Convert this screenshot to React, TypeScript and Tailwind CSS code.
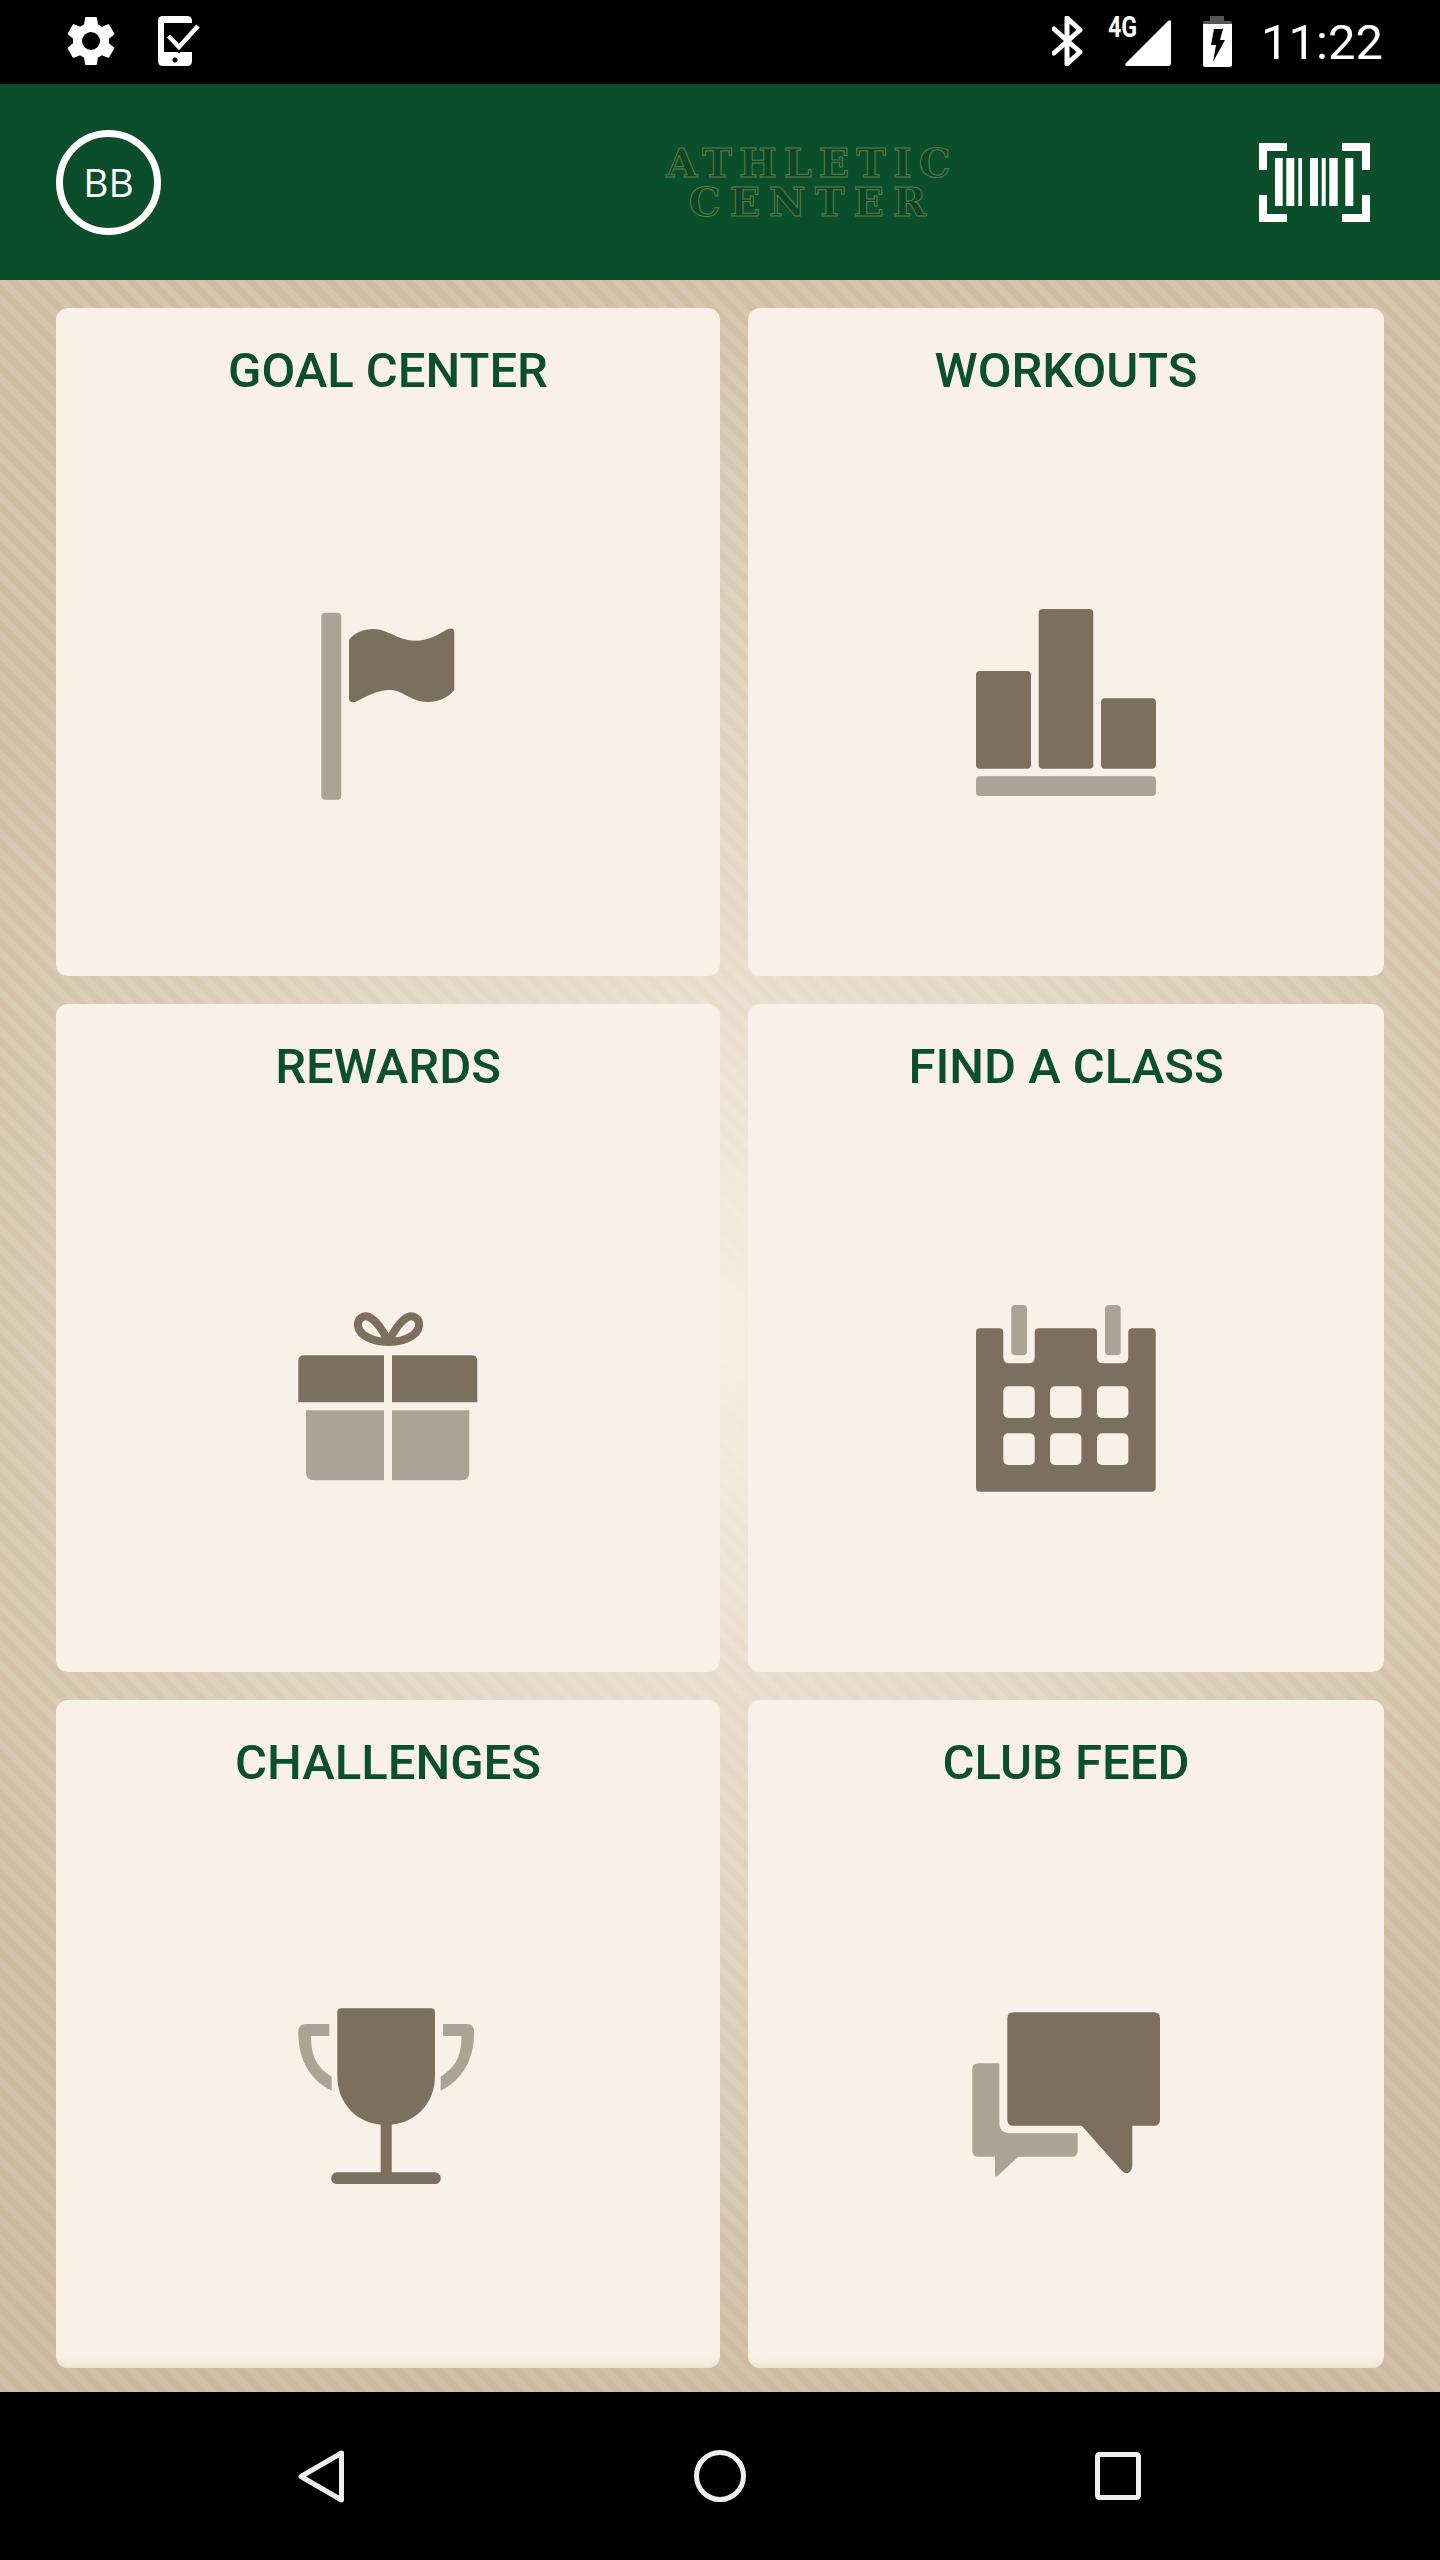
import React from "react";

const DARK = "#7c6f5d";
const LIGHT = "#aca296";
const CARD = "#f9f0e7";

const FlagIcon = () => (
  <svg width="180" height="196" viewBox="0 0 180 196" className="overflow-visible">
    <rect x="23.3" y="4.7" width="20" height="187" rx="4" fill={LIGHT} />
    <path
      d="M51 32C56 25 65 21 75 21C90 21 100 32.7 117 32.7C130 32.7 140 27 149 21.5Q156.3 18.5 156.3 25V82C150 90 140 94 130 94C113 94 105 82 92 82C78 82 68 89 57 94Q51 95.5 51 90Z"
      fill={DARK}
    />
  </svg>
);

const BarsIcon = () => (
  <svg width="180" height="196" viewBox="0 0 180 196" className="overflow-visible">
    <rect x="0" y="63" width="55" height="97.7" rx="4" fill={DARK} />
    <rect x="62.7" y="1" width="54.6" height="159.7" rx="4" fill={DARK} />
    <rect x="125" y="90.3" width="55" height="70.4" rx="4" fill={DARK} />
    <rect x="0" y="168.3" width="180" height="19.7" rx="4" fill={LIGHT} />
  </svg>
);

const GiftIcon = () => (
  <svg width="180" height="196" viewBox="0 0 180 196" className="overflow-visible">
    <path d="M90.5 38C80 38 62 34 60 22C59 14 66 11 71 13C78 16 86 28 90.5 38Z" fill="none" stroke={DARK} strokeWidth="8" strokeLinejoin="round" />
    <path d="M90.5 38C101 38 119 34 121 22C122 14 115 11 110 13C103 16 95 28 90.5 38Z" fill="none" stroke={DARK} strokeWidth="8" strokeLinejoin="round" />
    <path d="M6 51.3H86V98.3H0.3V57Q0.3 51.3 6 51.3Z" fill={DARK} />
    <path d="M94 51.3H173.6Q179.3 51.3 179.3 57V98.3H94Z" fill={DARK} />
    <path d="M8 106.3H86V176.3H16Q8 176.3 8 168.3Z" fill={LIGHT} />
    <path d="M94 106.3H171.3V168.3Q171.3 176.3 163.3 176.3H94Z" fill={LIGHT} />
  </svg>
);

const CalendarIcon = () => (
  <svg width="180" height="196" viewBox="0 0 180 196" className="overflow-visible">
    <path
      d="M4 24.3H23.3Q27.3 24.3 27.3 28.3V53.3Q27.3 59.3 33.3 59.3H52.7Q58.7 59.3 58.7 53.3V28.3Q58.7 24.3 62.7 24.3H117Q121 24.3 121 28.3V53.3Q121 59.3 127 59.3H146.3Q152.3 59.3 152.3 53.3V28.3Q152.3 24.3 156.3 24.3H175.7Q179.7 24.3 179.7 28.3V183.7Q179.7 187.7 175.7 187.7H4Q0 187.7 0 183.7V28.3Q0 24.3 4 24.3Z"
      fill={DARK}
    />
    <rect x="35.3" y="1" width="15.7" height="50.3" rx="4" fill={LIGHT} />
    <rect x="129" y="1" width="15.7" height="50.3" rx="4" fill={LIGHT} />
    {[82.3, 129.3].map((y) =>
      [27.3, 74, 121].map((x) => (
        <rect key={`${x}-${y}`} x={x} y={y} width="31.4" height="31.7" rx="5" fill={CARD} />
      ))
    )}
  </svg>
);

const TrophyIcon = () => (
  <svg width="180" height="196" viewBox="0 0 180 196" className="overflow-visible">
    <path d="M31.3 24H8Q0.3 24 0.3 32C0.3 60 12 80 33.7 90.7V76.7C20 68 13 58 13 36H31.3Z" fill={LIGHT} />
    <path d="M145.1 24H168.4Q176.1 24 176.1 32C176.1 60 164.4 80 142.7 90.7V76.7C156.4 68 163.4 58 163.4 36H145.1Z" fill={LIGHT} />
    <path d="M43 8.3H133Q137 8.3 137 12.3V76C137 105 115 125 88 125C61 125 39.3 105 39.3 76V12.3Q39.3 8.3 43 8.3Z" fill={DARK} />
    <rect x="82.7" y="120" width="11" height="56" fill={DARK} />
    <rect x="33.3" y="172.3" width="109.4" height="11.7" rx="5.5" fill={DARK} />
  </svg>
);

const ChatIcon = () => (
  <svg width="180" height="196" viewBox="0 0 180 196" className="overflow-visible">
    <path d="M2.3 63.3H23.3V122Q23.3 133.3 34 133.3H101.7V150.7Q101.7 156.7 95.7 156.7H42.3L22 175.5Q19 178 19 174V156.7H2.3Q-3.7 156.7 -3.7 150.7V69.3Q-3.7 63.3 2.3 63.3Z" fill={LIGHT} />
    <path d="M37.3 12.3H178Q184 12.3 184 18.3V119.7Q184 125.7 178 125.7H156.3V165Q156.3 171 152 173Q149 174 146 171L105.7 125.7H37.3Q31.3 125.7 31.3 119.7V18.3Q31.3 12.3 37.3 12.3Z" fill={DARK} />
  </svg>
);

const cards = [
  { title: "GOAL CENTER", icon: <FlagIcon /> },
  { title: "WORKOUTS", icon: <BarsIcon /> },
  { title: "REWARDS", icon: <GiftIcon /> },
  { title: "FIND A CLASS", icon: <CalendarIcon /> },
  { title: "CHALLENGES", icon: <TrophyIcon /> },
  { title: "CLUB FEED", icon: <ChatIcon /> },
];

const StatusBar = () => (
  <div className="flex h-[84px] shrink-0 items-center bg-black pl-[66px] pr-[57px] text-white">
    {/* settings gear */}
    <svg width="50" height="50" viewBox="2.2 2 19.6 20" fill="white" className="mt-[-2px]">
      <path d="M19.14 12.94c.04-.3.06-.61.06-.94s-.02-.64-.07-.94l2.03-1.58a.49.49 0 0 0 .12-.61l-1.92-3.32a.49.49 0 0 0-.59-.22l-2.39.96a7 7 0 0 0-1.62-.94l-.36-2.54a.48.48 0 0 0-.48-.41h-3.84a.48.48 0 0 0-.47.41l-.36 2.54c-.59.24-1.13.57-1.62.94l-2.39-.96a.49.49 0 0 0-.59.22L2.74 8.87a.48.48 0 0 0 .12.61l2.03 1.58c-.05.3-.09.63-.09.94s.02.64.07.94l-2.03 1.58a.49.49 0 0 0-.12.61l1.92 3.32c.12.22.37.29.59.22l2.39-.96c.5.38 1.03.7 1.62.94l.36 2.54c.05.24.24.41.48.41h3.84c.24 0 .44-.17.47-.41l.36-2.54c.59-.24 1.13-.56 1.62-.94l2.39.96c.22.08.47 0 .59-.22l1.92-3.32a.48.48 0 0 0-.12-.61zM12 15.6A3.6 3.6 0 1 1 12 8.4a3.6 3.6 0 0 1 0 7.2z" />
    </svg>
    {/* phone with check */}
    <svg width="42" height="50" viewBox="0 0 42 50" className="ml-[42px] mt-[-2px]">
      <path d="M5 0H29Q34 0 34 5V7H6V36H34V45Q34 50 29 50H5Q0 50 0 45V5Q0 0 5 0Z" fill="white" />
      <circle cx="17" cy="44" r="2.5" fill="black" />
      <path d="M8 7H34V11L21 31L8 20Z" fill="black" />
      <path d="M10.5 20L21 31L40 10" fill="none" stroke="black" strokeWidth="9" />
      <path d="M10.5 20L21 31L40 10" fill="none" stroke="white" strokeWidth="4.5" />
    </svg>
    <div className="flex-1" />
    {/* bluetooth */}
    <svg width="32" height="50" viewBox="0 0 32 50" className="mt-[-2px]">
      <path d="M2 13L28 36L15 48V2L28 14L2 37" fill="none" stroke="white" strokeWidth="5" strokeLinejoin="round" strokeLinecap="round" />
    </svg>
    {/* 4G + signal */}
    <div className="relative ml-[24px] mt-[-2px] h-[50px] w-[63px]">
      <svg width="47" height="47" viewBox="0 0 47 47" className="absolute bottom-0 right-0">
        <path d="M47 3V44Q47 47 44 47H3Q0 47 2 44L44 2Q47 0 47 3Z" fill="white" />
      </svg>
      <span className="absolute left-0 top-[-3px] origin-left scale-x-[0.8] font-['Roboto',sans-serif] text-[29px] font-bold leading-[29px]">
        4G
      </span>
    </div>
    {/* battery charging */}
    <svg width="29" height="51" viewBox="0 0 29 51" className="ml-[32px] mt-[-2px]">
      <path d="M7 0H21V5H27Q29 5 29 7V10H0V7Q0 5 2 5H7Z" fill="#555555" />
      <path d="M0 8H29V49Q29 51 27 51H2Q0 51 0 49Z" fill="white" />
      <path d="M11 13H20L17 24H22L10 46L13 29H8Z" fill="black" />
    </svg>
    <span className="ml-[29px] font-['Roboto',sans-serif] text-[49px] leading-none">11:22</span>
  </div>
);

const Header = () => (
  <div className="flex h-[196px] shrink-0 items-center bg-[#0b4e2b] pl-[56px] pr-[70px]">
    <div className="flex h-[105px] w-[105px] items-center justify-center rounded-full border-[7px] border-white font-['Open_Sans',sans-serif] text-[39px] text-white">
      BB
    </div>
    <div className="flex flex-1 flex-col items-center pl-[204px] font-['DejaVu_Serif',serif] text-[40px] font-bold leading-[39px] text-[#0b4526] [-webkit-text-stroke:1px_#5d7f49]">
      <span className="tracking-[7px]">ATHLETIC</span>
      <span className="tracking-[9px]">CENTER</span>
    </div>
    <svg width="111" height="79" viewBox="0 0 111 79">
      <path d="M28 4H4V27M83 4H107V27M28 75H4V52M83 75H107V52" fill="none" stroke="white" strokeWidth="8" />
      <g fill="white">
        <rect x="16" y="15" width="7.7" height="48" />
        <rect x="27.3" y="15" width="8" height="48" />
        <rect x="39.3" y="15" width="3.7" height="48" />
        <rect x="51" y="15" width="8" height="48" />
        <rect x="62.7" y="15" width="4" height="48" />
        <rect x="70.3" y="15" width="8.4" height="48" />
        <rect x="86.3" y="15" width="8" height="48" />
      </g>
    </svg>
  </div>
);

const NavBar = () => (
  <div className="flex h-[168px] shrink-0 items-center bg-black pl-[298px] pr-[299px]">
    <svg width="46" height="53" viewBox="0 0 46 53">
      <path d="M43.5 3L3 26.5L43.5 50Z" fill="none" stroke="#eeeeee" strokeWidth="5" strokeLinejoin="round" />
    </svg>
    <svg width="52" height="52" viewBox="0 0 52 52" className="ml-[350px]">
      <circle cx="26" cy="26" r="23.5" fill="none" stroke="#eeeeee" strokeWidth="5" />
    </svg>
    <svg width="46" height="48" viewBox="0 0 46 48" className="ml-[349px]">
      <rect x="2.5" y="2.5" width="41" height="43" rx="2" fill="none" stroke="#eeeeee" strokeWidth="5" />
    </svg>
  </div>
);

export default function App() {
  return (
    <div className="flex h-[2560px] w-[1440px] flex-col overflow-hidden">
      <StatusBar />
      <Header />
      <div className="grid flex-1 grid-cols-[664px_636px] grid-rows-[668px_668px_668px] gap-[28px] bg-[radial-gradient(ellipse_60%_52%_at_50%_50%,rgba(250,243,234,0.92)_0%,rgba(250,243,234,0.55)_35%,rgba(250,243,234,0)_100%),linear-gradient(180deg,rgba(190,170,140,0)_60%,rgba(190,170,140,0.22)_100%),repeating-linear-gradient(45deg,#cfbda2_0px,#cfbda2_7px,#d5c5ad_7px,#d5c5ad_14px)] px-[56px] pt-[28px]">
        {cards.map((card, i) => (
          <div
            key={card.title}
            className={`flex flex-col items-center rounded-xl bg-[#f9f0e7] ${i > 3 ? "shadow-[inset_0_-10px_8px_-8px_#e6dccc]" : ""}`}
          >
            <h2 className="mt-[40px] h-[46px] font-['Roboto',sans-serif] text-[49px] font-medium leading-[46px] text-[#0c4f2c]">
              {card.title}
            </h2>
            <div className="mt-[214px]">{card.icon}</div>
          </div>
        ))}
      </div>
      <NavBar />
    </div>
  );
}
